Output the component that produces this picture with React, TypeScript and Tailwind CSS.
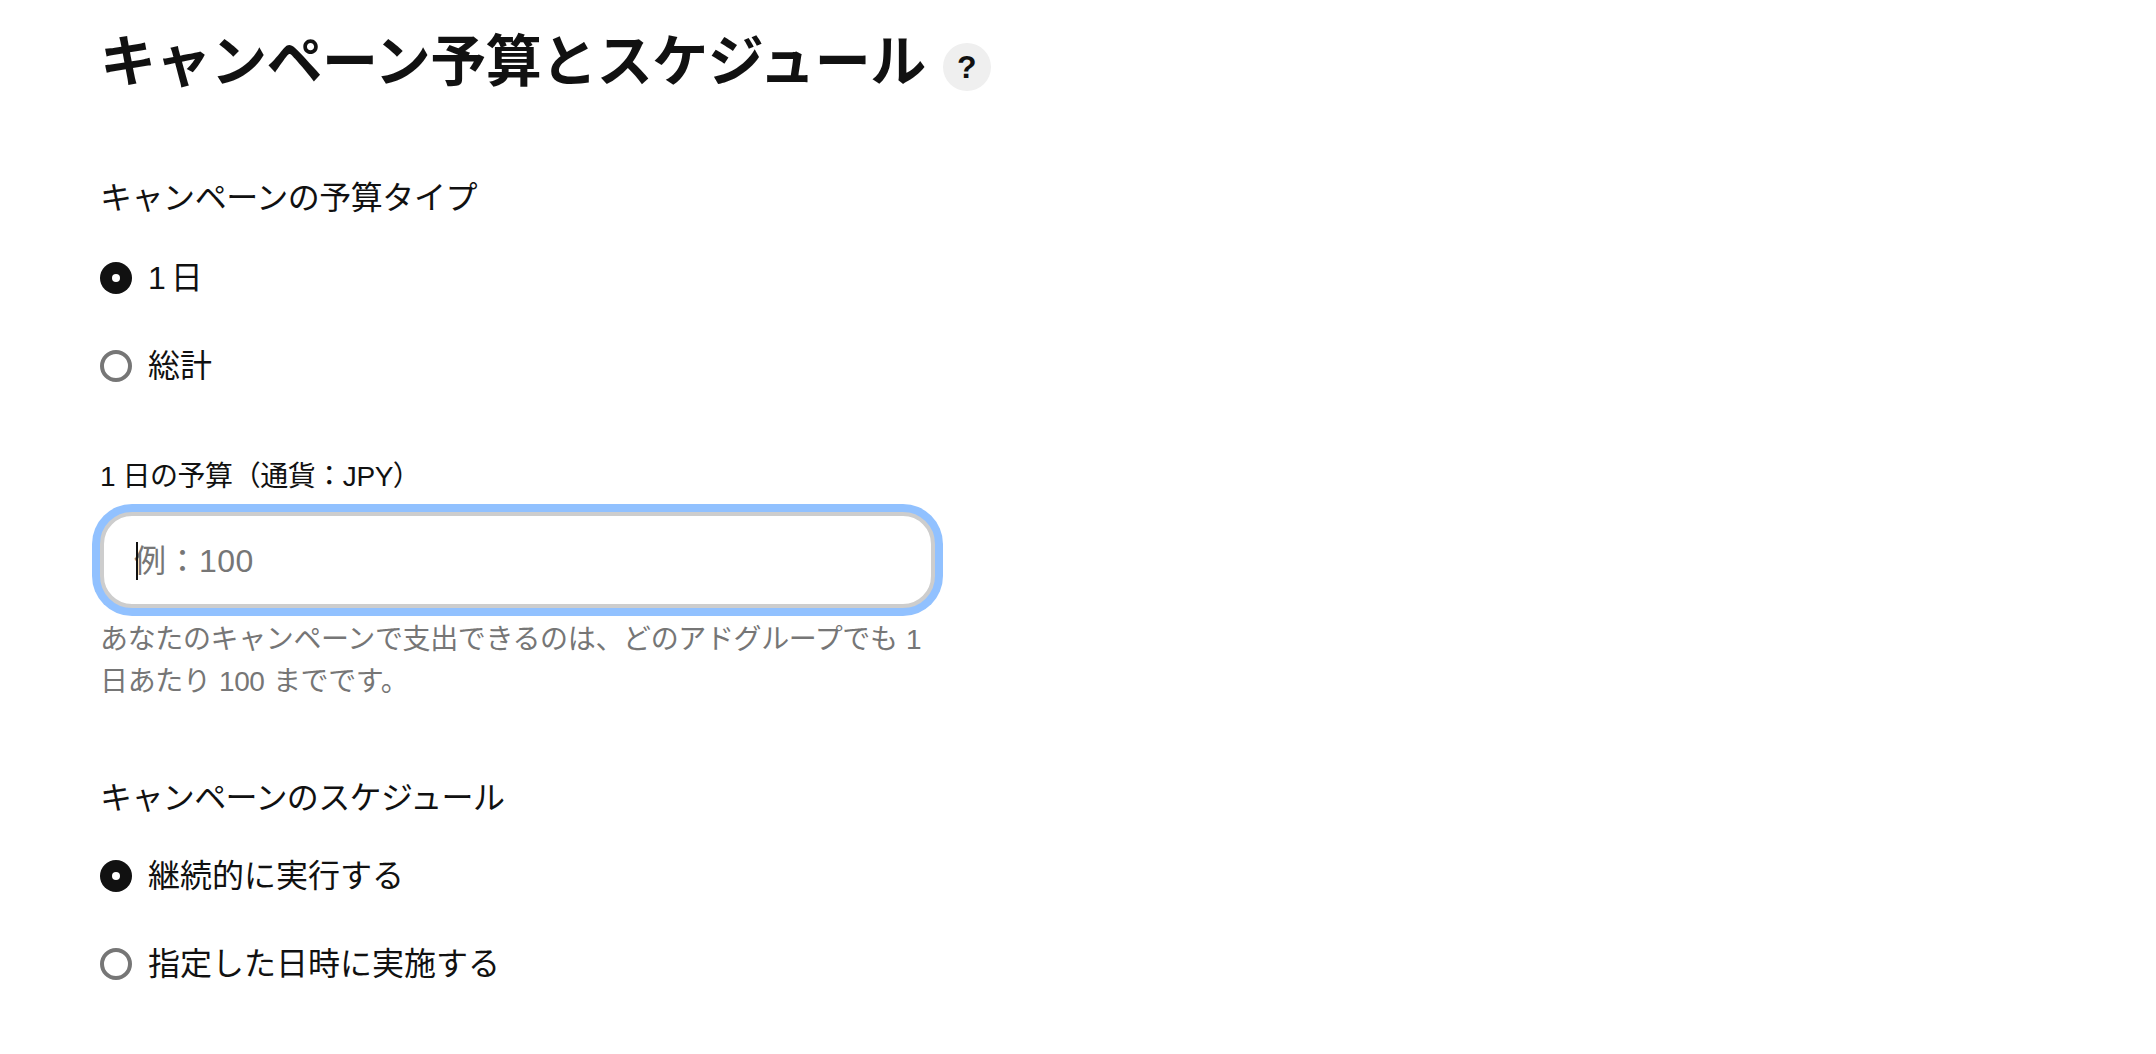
export default function App() {
  const font = "font-['Liberation_Sans','Noto_Sans_CJK_JP',sans-serif]";
  const Radio = ({ on, label, cls }: { on: boolean; label: string; cls: string }) => (
    <div className={`flex items-center h-[44px] ${cls}`}>
      {on ? (
        <span className="w-8 h-8 rounded-full bg-[#111111] flex items-center justify-center shrink-0">
          <span className="w-2 h-2 rounded-full bg-white" />
        </span>
      ) : (
        <span className="w-8 h-8 rounded-full border-4 border-[#767676] bg-white shrink-0" />
      )}
      <span className="ml-4 text-[32px] leading-[44px] text-[#111111] [word-spacing:-4px]">{label}</span>
    </div>
  );
  return (
    <div className={`${font} w-[2156px] h-[1054px] overflow-hidden bg-white pl-[100px] pt-[22px] text-[#111111]`}>
      <div className="flex items-center h-[80px]">
        <h1 className="text-[56px] leading-[80px] font-bold tracking-[-0.5px]">キャンペーン予算とスケジュール</h1>
        <span className="ml-[17px] mt-[10px] w-12 h-12 rounded-full bg-[#efefef] flex items-center justify-center text-[32px] font-bold">?</span>
      </div>
      <div className="mt-[74px] text-[32px] leading-[44px] tracking-[-0.45px]">キャンペーンの予算タイプ</div>
      <Radio on label="1 日" cls="mt-[36px]" />
      <Radio on={false} label="総計" cls="mt-[44px]" />
      <div className="mt-[69px] text-[28px] leading-[40px] tracking-[-0.45px]">1 日の予算（通貨：JPY）</div>
      <div className="relative mt-[15px] w-[835px] h-[96px] rounded-[32px] border-4 border-[#cdcdcd] bg-white shadow-[0_0_0_8px_#91c1ff]">
        <input readOnly placeholder="例：100" className="w-full h-full px-[30px] pt-[2px] text-[32px] tracking-[0.5px] bg-transparent outline-none placeholder:text-[#767676]" />
        <span className="absolute left-[32px] top-[26px] w-[2px] h-[38px] bg-[#111111]" />
      </div>
      <p className="mt-[11px] w-[835px] text-[28px] leading-[42px] tracking-[-0.37px] [word-spacing:1px] text-[#767676]">あなたのキャンペーンで支出できるのは、どのアドグループでも 1 日あたり 100 までです。</p>
      <div className="mt-[73px] text-[32px] leading-[44px] tracking-[-0.6px]">キャンペーンのスケジュール</div>
      <Radio on label="継続的に実行する" cls="mt-[34px]" />
      <Radio on={false} label="指定した日時に実施する" cls="mt-[44px]" />
    </div>
  );
}
